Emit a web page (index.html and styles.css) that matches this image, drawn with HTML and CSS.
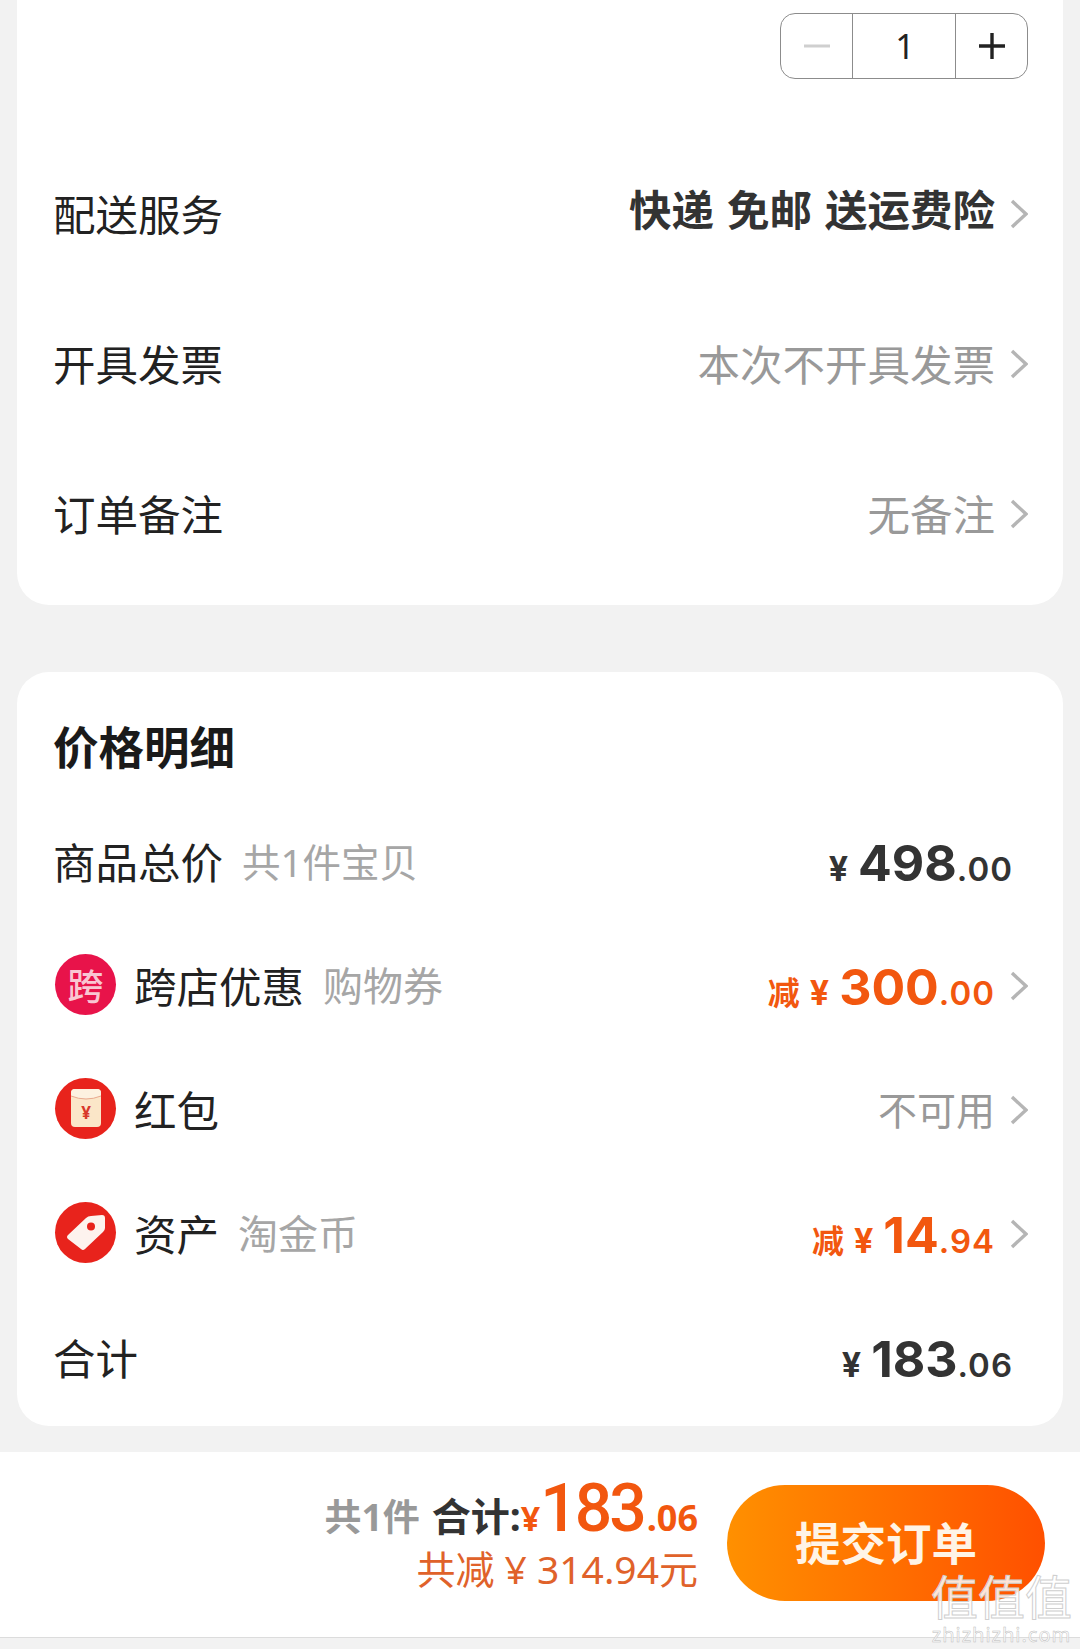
FILE: index.html
```html
<!DOCTYPE html>
<html lang="zh-CN">
<head>
    <meta charset="UTF-8">
    <meta name="viewport" content="width=device-width, initial-scale=1.0">
    <title>确认订单</title>
    <link rel="stylesheet" href="styles.css">
</head>
<body>
    <section class="card card-order">
        <div class="stepper-row">
            <div class="stepper">
                <span class="step step-minus"><svg width="28" height="4" viewBox="0 0 28 4"><path d="M1 2H27" stroke="#cfcfcf" stroke-width="3"/></svg></span>
                <span class="step-value">1</span>
                <span class="step step-plus"><svg width="28" height="28" viewBox="0 0 28 28"><path d="M1 14H27M14 1V27" stroke="#222" stroke-width="3.4"/></svg></span>
            </div>
        </div>
        <div class="row">
            <span class="label">配送服务</span>
            <span class="value value-bold"><span class="value-text">快递 免邮 送运费险</span><svg class="chevron" viewBox="0 0 18 30"><path d="M2 2L16 15L2 28" /></svg></span>
        </div>
        <div class="row">
            <span class="label">开具发票</span>
            <span class="value">本次不开具发票<svg class="chevron" viewBox="0 0 18 30"><path d="M2 2L16 15L2 28" /></svg></span>
        </div>
        <div class="row">
            <span class="label">订单备注</span>
            <span class="value">无备注<svg class="chevron" viewBox="0 0 18 30"><path d="M2 2L16 15L2 28" /></svg></span>
        </div>
    </section>

    <section class="card card-price">
        <h2 class="card-title">价格明细</h2>
        <div class="price-row">
            <span class="label">商品总价<span class="note note-count">共1件宝贝</span></span>
            <span class="amount amount-plain"><span class="yen">¥</span><span class="int">498</span><span class="dec">.00</span></span>
        </div>
        <div class="price-row">
            <span class="label">
                <span class="badge badge-cross">跨</span>跨店优惠<span class="note">购物券</span>
            </span>
            <span class="amount amount-off"><span class="off">减</span><span class="yen">¥</span><span class="int">300</span><span class="dec">.00</span><svg class="chevron" viewBox="0 0 18 30"><path d="M2 2L16 15L2 28" /></svg></span>
        </div>
        <div class="price-row">
            <span class="label">
                <span class="badge badge-red">
                    <svg width="32" height="40" viewBox="0 0 32 40"><rect x="1" y="1" width="30" height="38" rx="4" fill="#fbe6c8"/><path d="M1 8Q16 14 31 8V5Q31 1 27 1H5Q1 1 1 5Z" fill="#fdf1e0"/><path d="M1 8Q16 14 31 8" fill="none" stroke="#e9a98f" stroke-width="1"/><text x="16" y="31" text-anchor="middle" class="badge-yen">¥</text></svg>
                </span>红包
            </span>
            <span class="value value-small">不可用<svg class="chevron" viewBox="0 0 18 30"><path d="M2 2L16 15L2 28" /></svg></span>
        </div>
        <div class="price-row">
            <span class="label">
                <span class="badge badge-red">
                    <svg width="44" height="44" viewBox="0 0 44 44"><path d="M4 25L22 8Q24 6 27 6L38 5Q41 5 41 8L41 18Q41 20 39 22L21 39Q19 41 17 39L4 29Q2 27 4 25Z" fill="#fdf3ee"/><circle cx="27" cy="16.5" r="4" fill="#e8231c"/></svg>
                </span>资产<span class="note">淘金币</span>
            </span>
            <span class="amount amount-off"><span class="off">减</span><span class="yen">¥</span><span class="int">14</span><span class="dec">.94</span><svg class="chevron" viewBox="0 0 18 30"><path d="M2 2L16 15L2 28" /></svg></span>
        </div>
        <div class="price-row">
            <span class="label">合计</span>
            <span class="amount amount-plain"><span class="yen">¥</span><span class="int">183</span><span class="dec">.06</span></span>
        </div>
    </section>

    <footer class="submit-bar">
        <div class="summary">
            <div class="summary-total">
                <span class="count">共1件</span><span class="total-label">合计:</span><span class="total-yen">¥</span><span class="total-int">183</span><span class="total-dec">.06</span>
            </div>
            <div class="summary-off">共减 ¥ 314.94元</div>
        </div>
        <button class="submit-button">提交订单</button>
    </footer>

    <div class="watermark">
        <div class="watermark-mark">值值值</div>
        <div class="watermark-url">zhizhizhi.com</div>
    </div>
</body>
</html>
```

FILE: styles.css
```css
* {
    box-sizing: border-box;
}

body {
    margin: 0;
    width: 1080px;
    height: 1649px;
    position: relative;
    overflow: hidden;
    background: #f2f2f2;
    color: #222;
    font-family: "Noto Sans", "Noto Sans CJK SC", sans-serif;
}

.card {
    width: 1046px;
    margin-left: 17px;
    background: #fff;
}

.card-order {
    height: 605px;
    padding: 13px 35px 0 36px;
    border-radius: 0 0 32px 32px;
}

.card-price {
    height: 754px;
    margin-top: 67px;
    padding: 0 35px 0 36px;
    border-radius: 32px;
}

/* quantity stepper */
.stepper-row {
    display: flex;
    justify-content: flex-end;
    height: 127px;
}

.stepper {
    display: flex;
    width: 248px;
    height: 66px;
    border: 1px solid #8c8c8c;
    border-radius: 15px;
}

.step {
    display: flex;
    justify-content: center;
    align-items: center;
}

.step-minus {
    width: 71px;
}

.step-plus {
    flex: 1;
}

.step-value {
    width: 104px;
    border-left: 1px solid #8c8c8c;
    border-right: 1px solid #8c8c8c;
    font-size: 34px;
    line-height: 64px;
    text-align: center;
    padding-left: 2px;
}

/* rows */
.row {
    display: flex;
    justify-content: space-between;
    align-items: center;
    height: 150px;
    padding-bottom: 6px;
}

.label {
    display: flex;
    align-items: center;
    font-size: 42.5px;
    color: #222;
}

.value {
    display: flex;
    align-items: center;
    font-size: 42.5px;
    color: #999;
}

.value-bold {
    font-size: 42.5px;
    font-weight: 700;
    word-spacing: 2px;
    color: #333;
}

.value-small {
    font-size: 39px;
}

.value-text {
    margin-bottom: 10px;
}

.chevron {
    width: 18px;
    height: 30px;
    margin-left: 15px;
    margin-top: 4px;
    fill: none;
    stroke: #b5b5b5;
    stroke-width: 3.4;
}

.card-title {
    margin: 0;
    padding-top: 44px;
    height: 126px;
    font-size: 45.5px;
    line-height: 62px;
    font-weight: 700;
    color: #1a1a1a;
}

.price-row {
    display: flex;
    justify-content: space-between;
    align-items: center;
    height: 124px;
}

.note {
    margin-left: 19px;
    font-size: 40px;
    color: #a6a6a6;
}

.note-count {
    font-size: 38.5px;
}

.badge {
    display: flex;
    justify-content: center;
    align-items: center;
    width: 61px;
    height: 61px;
    margin-left: 2px;
    margin-right: 18px;
    border-radius: 50%;
    font-size: 36px;
    font-weight: 500;
    color: #f9c6d2;
}

.badge-cross {
    background: #e8134a;
}

.badge-red {
    background: #e8231c;
}

.badge-yen {
    font-size: 17px;
    font-weight: 700;
    fill: #d8392b;
}

/* money */
.amount {
    display: flex;
    align-items: baseline;
    margin-top: 6px;
    font-family: Inter, "Noto Sans CJK SC", sans-serif;
}

.amount-plain {
    padding-right: 15px;
    color: #333;
}

.amount-off {
    color: #f2570f;
}

.amount-off .chevron {
    align-self: center;
    margin-top: -2px;
}

.off {
    margin-right: 10px;
    font-size: 32px;
    font-weight: 700;
}

.yen {
    margin-right: 10px;
    font-size: 34px;
    font-weight: 700;
}

.int {
    font-size: 50px;
    font-weight: 700;
}

.dec {
    font-size: 33px;
    font-weight: 600;
    letter-spacing: 1px;
}

/* submit bar */
.submit-bar {
    display: flex;
    justify-content: flex-end;
    align-items: center;
    height: 186px;
    margin-top: 26px;
    padding: 0 35px 4px 0;
    background: #fff;
    border-bottom: 1px solid #dcdcdc;
}

.summary {
    display: flex;
    flex-direction: column;
    align-items: flex-end;
    margin-right: 29px;
    margin-bottom: 18px;
}

.summary-total {
    display: flex;
    align-items: baseline;
    height: 70px;
    line-height: 70px;
    font-weight: 700;
}

.count {
    margin-right: 12px;
    font-size: 37px;
    color: #999;
}

.total-label {
    font-size: 39px;
    color: #333;
}

.total-yen {
    font-size: 34px;
    color: #f2570f;
}

.total-int {
    font-family: Roboto, sans-serif;
    font-size: 66px;
    font-weight: 500;
    letter-spacing: -3px;
    color: #f2570f;
}

.total-dec {
    font-size: 36px;
    margin-left: 3px;
    color: #f2570f;
}

.summary-off {
    font-size: 39px;
    line-height: 50px;
    color: #e0622a;
}

.submit-button {
    width: 318px;
    height: 116px;
    border: none;
    border-radius: 58px;
    background: linear-gradient(90deg, #ff9000, #ff5000);
    color: #fff4e6;
    font-family: inherit;
    font-size: 45.5px;
    line-height: 50px;
    font-weight: 700;
    padding: 0;
}

/* site watermark on the corner */
.watermark {
    position: absolute;
    right: 8px;
    bottom: 2px;
    text-align: center;
    color: rgba(255, 255, 255, 0.85);
    -webkit-text-stroke: 1px #cfcfcf;
}

.watermark-mark {
    font-size: 47px;
    line-height: 52px;
}

.watermark-url {
    font-size: 20px;
    line-height: 24px;
    letter-spacing: 1px;
    -webkit-text-stroke: 0.5px #bdbdbd;
}
```
